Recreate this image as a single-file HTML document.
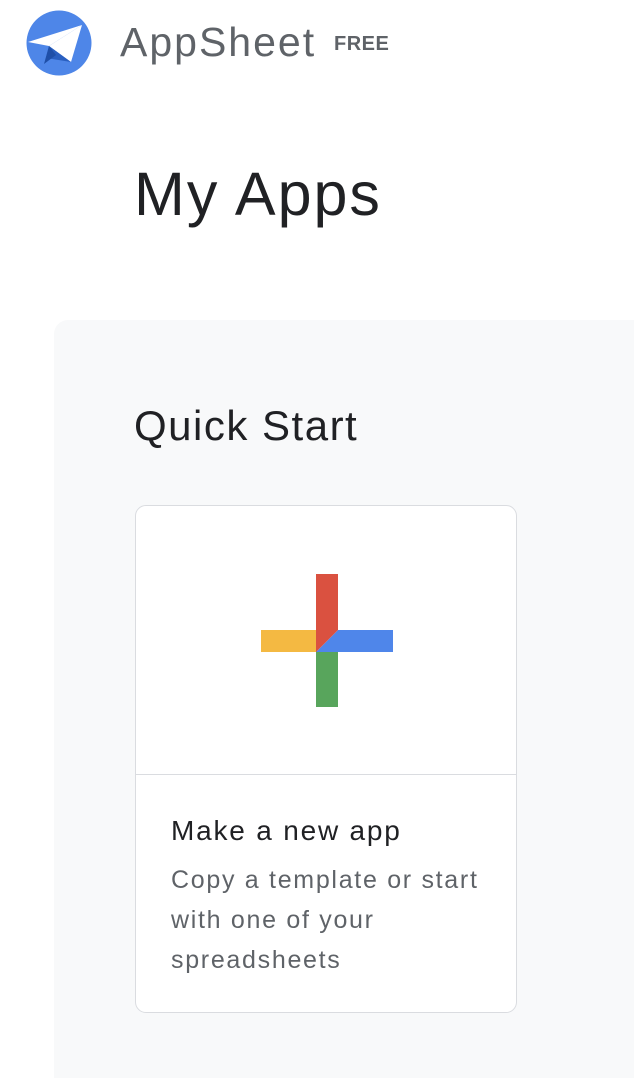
<!DOCTYPE html>
<html style="overflow:hidden;height:1078px"><head><style>
body{margin:0;width:634px;height:1078px;background:#fff;font-family:"Liberation Sans",sans-serif;position:relative;overflow:hidden}
.a{position:absolute;white-space:nowrap}
</style></head><body>
<svg class="a" style="left:0;top:0" width="120" height="90">
<circle cx="59" cy="43" r="32.5" fill="#4e86e8"/>
<polygon points="82,25 28,42 49,46" fill="#fff"/>
<polygon points="82,25 49,46 71,62" fill="#fff"/>
<polygon points="49,46 46,58 71,62" fill="#2a5fc0"/>
<polygon points="49,46 44,64 56,55" fill="#1f4fa8"/>
</svg>
<div class="a" style="left:120px;top:19px;font-size:41px;color:#5f6368;letter-spacing:2px">AppSheet</div>
<div class="a" style="left:334px;top:33px;font-size:20px;color:#5f6368;font-weight:bold;letter-spacing:0.5px">FREE</div>
<div class="a" style="left:134px;top:159px;font-size:61px;color:#202124;letter-spacing:2px">My Apps</div>
<div class="a" style="left:54px;top:320px;width:600px;height:758px;background:#f8f9fa;border-radius:14px 0 0 0"></div>
<div class="a" style="left:134px;top:402px;font-size:42px;color:#202124;letter-spacing:1.5px">Quick Start</div>
<div class="a" style="left:135px;top:505px;width:380px;height:506px;background:#fff;border:1px solid #dadce0;border-radius:11px"></div>
<div class="a" style="left:136px;top:774px;width:380px;height:1px;background:#dadce0"></div>
<svg class="a" style="left:0;top:0" width="634" height="720">
<rect x="261" y="630" width="56" height="22" fill="#f4b942"/>
<rect x="316" y="651" width="22" height="56" fill="#58a55c"/>
<polygon points="338,630 393,630 393,652 316,652" fill="#4f86ea"/>
<polygon points="316,574 338,574 338,630 316,652" fill="#da5140"/>
</svg>
<div class="a" style="left:171px;top:815px;font-size:28px;color:#202124;letter-spacing:1.8px">Make a new app</div>
<div class="a" style="left:171px;top:860px;font-size:25px;color:#5f6368;line-height:40px;letter-spacing:1.7px">Copy a template or start<br>with one of your<br>spreadsheets</div>
</body></html>
